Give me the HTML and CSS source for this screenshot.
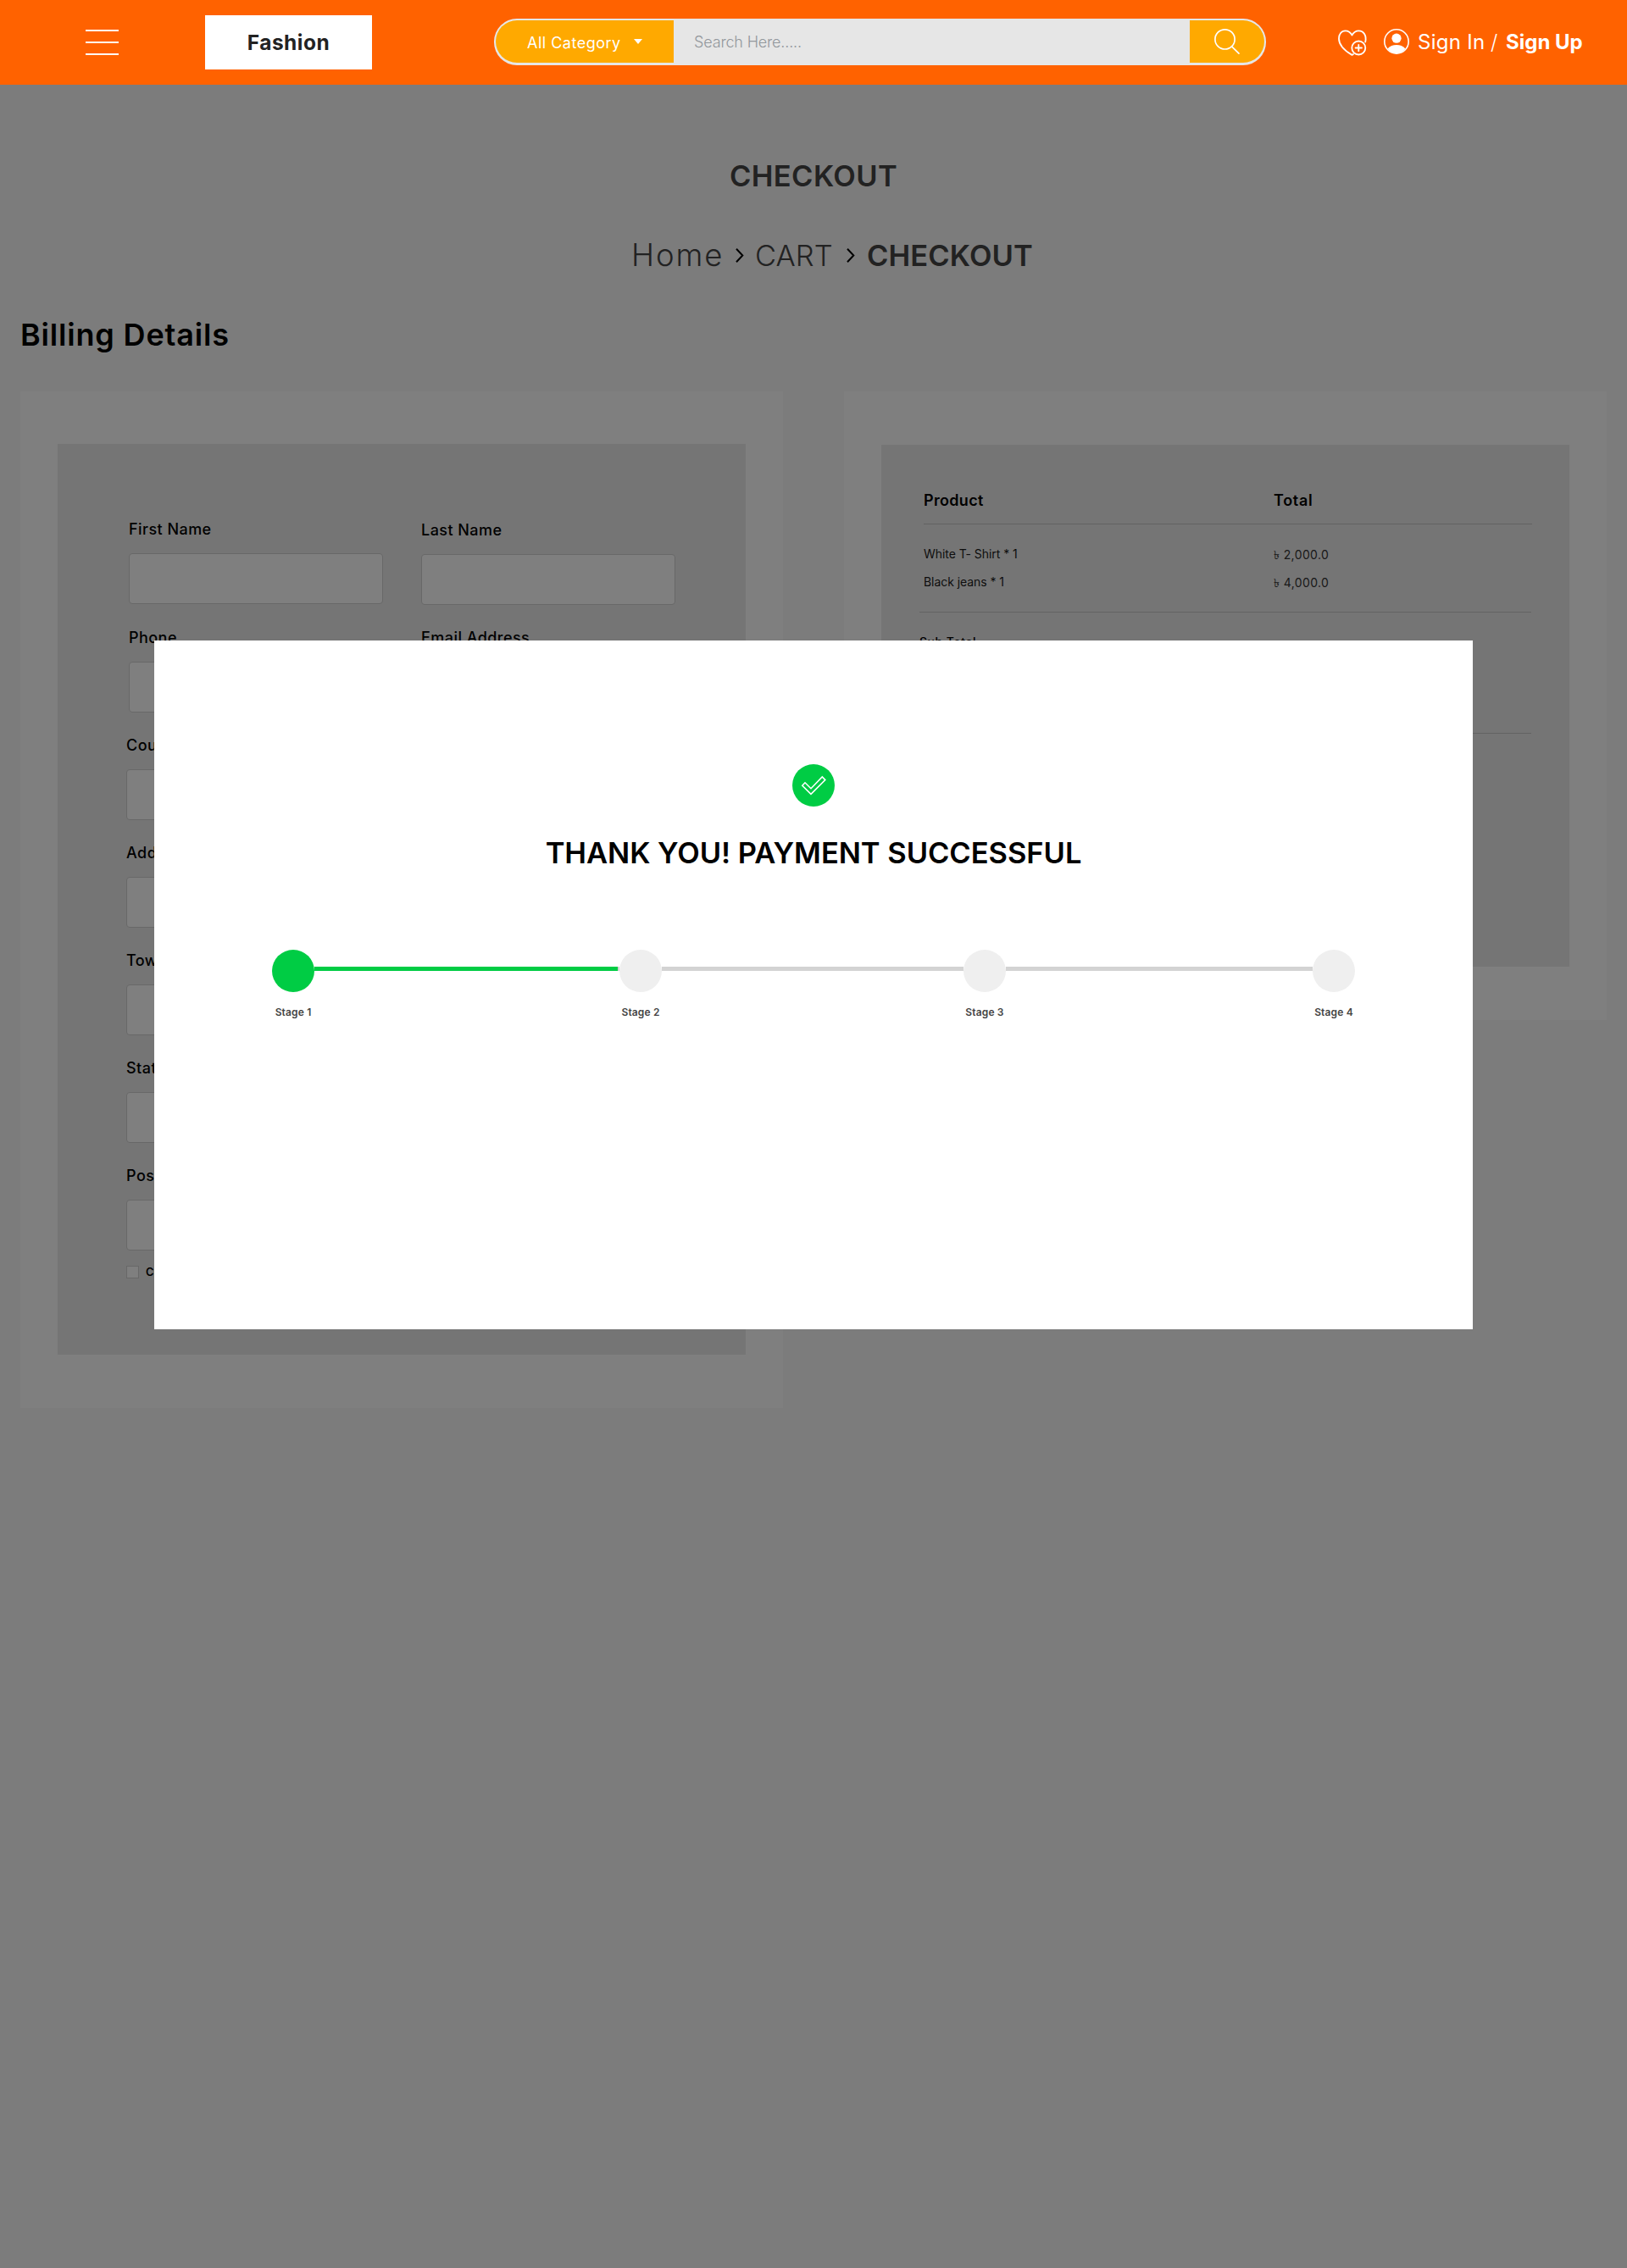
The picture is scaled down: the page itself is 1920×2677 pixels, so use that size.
FILE: index.html
```html
<!DOCTYPE html>
<html lang="en">
<head>
<meta charset="utf-8">
<title>Checkout</title>
<link rel="stylesheet" href="styles.css">
</head>
<body>
<header class="topbar">
  <div class="menu"><i></i><i></i><i></i></div>
  <a class="brand">Fashion</a>
  <form class="search">
    <div class="search-category"><span>All Category</span><i class="caret"></i></div>
    <div class="search-field"><span>Search Here.....</span></div>
    <div class="search-button">
      <svg width="32" height="32" viewBox="0 0 32 32" fill="none" stroke="#fff" stroke-width="1.7" stroke-linecap="round"><circle cx="13.5" cy="13.4" r="11.6"/><path d="M21.6 21.8 30 30.2"/></svg>
    </div>
  </form>
  <svg class="wish" width="36" height="32" viewBox="0 0 36 32" fill="none" stroke="#fff" stroke-width="1.8" stroke-linejoin="round" stroke-linecap="round">
    <path d="M33.2 15.500C35 8 31 2.300 25.500 2.300C22 2.300 19 4.500 17.500 7.500C16 4.500 13 2.300 9.500 2.300C5 2.300 2 6.500 2 11.500C2 20 10 26.500 17.500 30.900L19 29.900"/>
    <circle cx="25.300" cy="22.500" r="8"/><path d="M25.300 18.800v7.400M21.600 22.500h7.400"/>
  </svg>
  <svg class="user" width="30" height="30" viewBox="0 0 30 30"><circle cx="15" cy="15" r="14.200" fill="none" stroke="#fff" stroke-width="1.600"/><circle cx="15" cy="11.200" r="5.600" fill="#fff"/><path fill="#fff" d="M4.500 23.500C7 20.300 11 19 15 19s8 1.300 10.500 4.500C23 27 19.500 29.200 15 29.200S7 27 4.500 23.500z"/></svg>
  <nav class="auth"><span class="signin">Sign In</span><span class="slash">/</span><b>Sign Up</b></nav>
</header>
<main class="page">
  <h1 class="title">CHECKOUT</h1>
  <nav class="crumbs">
    <span class="crumb home">Home</span>
    <svg class="chev" width="10" height="17" viewBox="0 0 10 17" fill="none" stroke="#000" stroke-width="2"><path d="M1 .8 8.300 8.500 1 16.200"/></svg>
    <span class="crumb cart">CART</span>
    <svg class="chev" width="10" height="17" viewBox="0 0 10 17" fill="none" stroke="#000" stroke-width="2"><path d="M1 .8 8.300 8.500 1 16.200"/></svg>
    <span class="crumb current">CHECKOUT</span>
  </nav>
  <h2 class="section">Billing Details</h2>
  <div class="columns">
    <section class="card">
      <div class="panel form">
        <div class="names">
          <div class="stack">
            <label class="field"><span>First Name</span><i class="input"></i></label>
            <label class="field"><span>Phone</span><i class="input"></i></label>
          </div>
          <div class="stack right">
            <label class="field"><span>Last Name</span><i class="input"></i></label>
            <label class="field"><span>Email Address</span><i class="input"></i></label>
          </div>
        </div>
        <label class="field"><span>Country</span><i class="input"></i></label>
        <label class="field"><span>Address</span><i class="input"></i></label>
        <label class="field"><span>Town / City</span><i class="input"></i></label>
        <label class="field"><span>State</span><i class="input"></i></label>
        <label class="field"><span>Post Code</span><i class="input"></i></label>
        <label class="check"><i></i><span>Create an account?</span></label>
      </div>
    </section>
    <section class="card">
      <div class="panel order">
        <div class="row head"><span>Product</span><span class="total">Total</span></div>
        <div class="row item"><span>White T- Shirt * 1</span><span class="price">৳ 2,000.0</span></div>
        <div class="row item"><span>Black jeans * 1</span><span class="price">৳ 4,000.0</span></div>
        <div class="row sub"><span>Sub Total</span><span class="price">৳ 6,000.0</span></div>
      </div>
    </section>
  </div>
  <div class="overlay">
    <div class="modal">
      <svg class="done" width="50" height="50" viewBox="0 0 50 50"><circle cx="25" cy="25" r="25" fill="#00cc44"/><path d="M11.800 25.200 15 21.800 22 28.700 35.300 15 38.800 18.600 22 35.300z" fill="none" stroke="#fff" stroke-width="1.600"/></svg>
      <h2 class="thanks">THANK YOU! PAYMENT SUCCESSFUL</h2>
      <div class="steps">
        <div class="step on"><i></i><span>Stage 1</span></div>
        <div class="bar filled"></div>
        <div class="step"><i></i><span>Stage 2</span></div>
        <div class="bar"></div>
        <div class="step"><i></i><span>Stage 3</span></div>
        <div class="bar third"></div>
        <div class="step"><i></i><span>Stage 4</span></div>
      </div>
    </div>
  </div>
</main>
</body>
</html>
```
FILE: styles.css
```css
* { box-sizing: border-box; }
body { margin: 0; font-family: Inter, "Open Sans", sans-serif; color: #000; background: #f8f8f8; }
i { display: block; font-style: normal; }
h1, h2 { margin: 0; }
svg { display: block; flex: none; }
span, b { white-space: nowrap; }

.topbar { display: flex; align-items: center; height: 100px; padding-left: 101px; background: #ff6200; color: #fff; }
.menu { width: 39px; display: grid; gap: 12px; }
.menu i { height: 2px; background: #fff; }
.brand { display: flex; align-items: center; justify-content: center; width: 197px; height: 64px; margin-left: 102px; padding-bottom: 1px; background: #fff; color: #222; font-size: 24.500px; font-weight: 700; letter-spacing: .5px; }
.search { display: flex; width: 911px; height: 55px; margin: 0 0 1px 144px; padding: 2px 2px 3px; border-radius: 27px; background: #e6e6e6; }
.search-category { display: flex; align-items: center; gap: 15px; width: 210px; padding-left: 37px; border-radius: 25px 0 0 25px; background: #ffa900; font-size: 18px; letter-spacing: .5px; }
.search-category span { padding-top: 2px; }
.caret { margin-bottom: 1px; border: 5px solid transparent; border-top: 6px solid #fff; border-bottom: 0; }
.search-field { display: flex; align-items: center; flex: 1; padding-left: 24px; color: #92979c; font-size: 18px; font-weight: 300; letter-spacing: -.16px; }
.search-button { width: 88px; padding: 9px 0 0 28px; border-radius: 0 25px 25px 0; background: #ffa900; }
.wish { margin-left: 84px; }
.user { margin: 0 0 2px 19px; }
.auth { display: flex; margin-left: 10px; font-size: 24px; line-height: 30px; }
.signin { width: 86px; letter-spacing: .28px; }
.slash { width: 18px; font-weight: 300; }

.page { position: relative; height: 2577px; padding: 87px 24px 0; }
.title { height: 40px; line-height: 41px; text-align: center; font-size: 34.500px; font-weight: 600; letter-spacing: .39px; color: #444; }
.crumbs { display: flex; align-items: center; height: 40px; margin-top: 54px; padding-left: 721px; font-size: 34.500px; color: #444; }
.chev { margin: 0 13px 0 16px; }
.crumb { font-weight: 300; line-height: 41px; }
.crumb.home { width: 107px; font-size: 36.500px; letter-spacing: 1.900px; }
.crumb.cart { width: 92px; }
.crumb.current { padding-left: 1px; font-weight: 600; letter-spacing: .1px; }
.section { height: 40px; margin-top: 54px; line-height: 40px; font-size: 36px; font-weight: 600; letter-spacing: .820px; }
.columns { display: flex; align-items: flex-start; justify-content: space-between; margin-top: 47px; }
.card { width: 900px; padding: 62px 44px 63px; background: #fff; }
.panel { background: #ebebeb; }

.form { height: 1075px; padding: 90px 83px 0 81px; }
.names { display: flex; gap: 45px; padding-left: 3px; margin-bottom: 28px; }
.stack { width: 300px; display: grid; gap: 29px; }
.stack.right { padding-top: 1px; gap: 28px; }
.field { display: block; font-size: 18px; font-weight: 500; letter-spacing: .45px; }
.field > span { display: block; height: 21px; line-height: 21px; }
.input { height: 60px; margin-top: 18px; border: 1px solid #d0d0d0; border-radius: 4px; background: #fff; }
.field + .field { margin-top: 28px; }
.stack .field + .field { margin-top: 0; }
.check { display: flex; align-items: center; gap: 8px; margin-top: 17px; font-size: 13px; font-weight: 600; }
.check i { width: 15px; height: 15px; border: 1px solid #d0d0d0; background: #fff; }

.order { height: 616px; margin-top: 1px; padding: 56px 44px 0 50px; }
.row { display: grid; grid-template-columns: 413px 1fr; line-height: 20px; }
.head { height: 38px; border-bottom: 1px solid #c4c4c4; font-size: 18px; font-weight: 600; letter-spacing: .32px; }
.total { letter-spacing: .7px; }
.item { font-size: 14px; margin-top: 13px; letter-spacing: -.06px; color: #1a1a1a; }
.head + .item { margin-top: 25px; }
.price { padding-top: 2px; line-height: 18px; letter-spacing: .38px; font-weight: 400; color: #333; }
.sub { height: 144px; margin: 25px 1px 0 -5px; padding-top: 25px; border: 1px solid #c4c4c4; border-width: 1px 0; grid-template-columns: 418px 1fr; font-size: 14px; font-weight: 500; letter-spacing: .48px; }
.sub .price { padding-top: 6px; }

.overlay { position: absolute; inset: 0; padding-top: 656px; background: rgba(0, 0, 0, .5); }
.modal { width: 1556px; height: 813px; margin: 0 auto; padding: 146px 139px 0; background: #fff; }
.done { margin: 0 auto; }
.thanks { height: 40px; margin-top: 35px; line-height: 40px; text-align: center; font-size: 34.500px; font-weight: 600; letter-spacing: -.05px; }
.steps { display: flex; margin-top: 94px; }
.step { display: flex; flex-direction: column; align-items: center; gap: 14px; width: 50px; font-size: 12px; line-height: 20px; font-weight: 600; letter-spacing: .15px; color: #444; }
.step i { width: 50px; height: 50px; border-radius: 50%; background: #efefef; }
.step.on i { background: #00cc44; }
.bar { flex: 356 1 0; height: 5px; margin-top: 20px; background: #d3d3d3; }
.bar.filled { flex-grow: 360; background: linear-gradient(90deg, #00cc44 358px, #d3d3d3 358px); }
.bar.third { flex-grow: 362; }
```
